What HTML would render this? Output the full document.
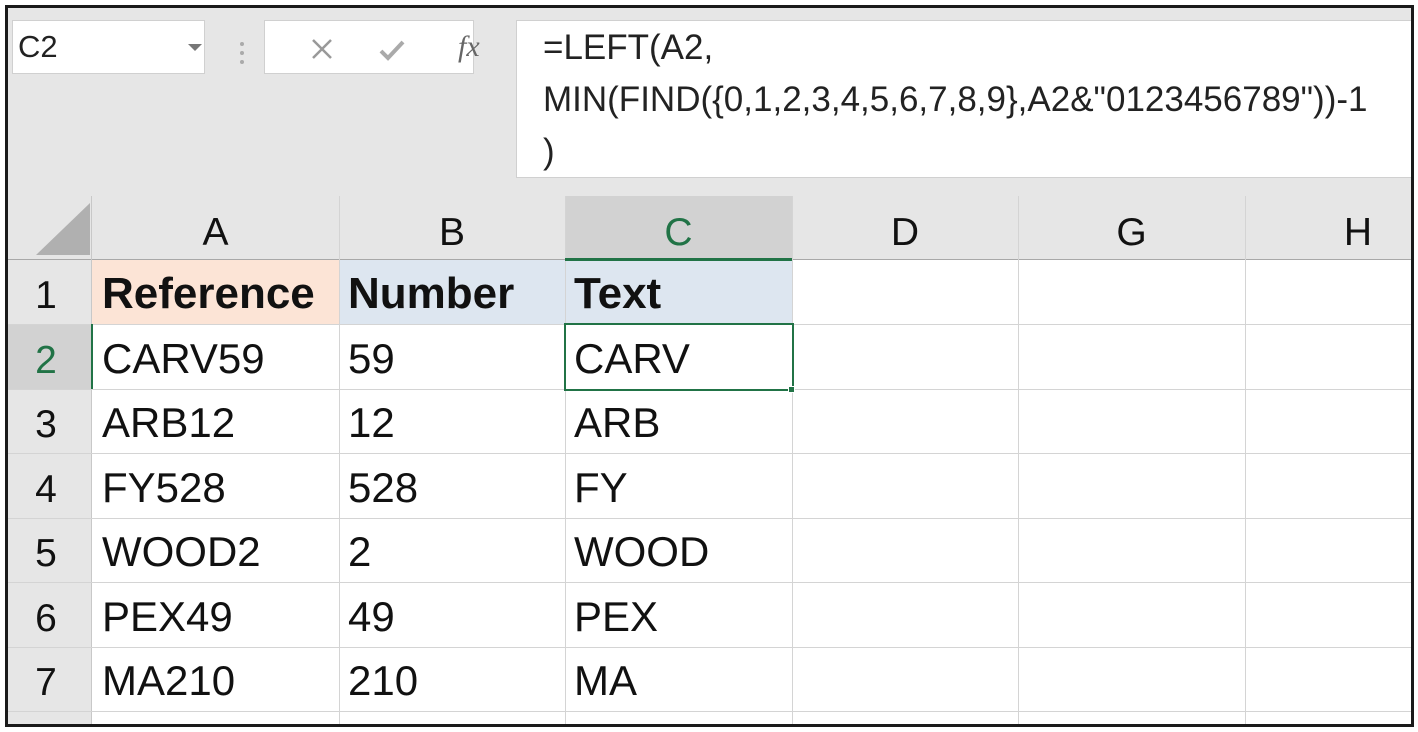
<!DOCTYPE html>
<html><head><meta charset="utf-8"><style>
*{margin:0;padding:0;box-sizing:border-box}
body{width:1418px;height:732px;background:#fff;position:relative;overflow:hidden;font-family:"Liberation Sans",sans-serif}
.a{position:absolute}
.frame{left:5px;top:5px;width:1409px;height:722px;border:3px solid #1a1a1a;background:#e6e6e6;overflow:hidden}
.box{background:#fff;border:1px solid #d0d0d0}
.t{position:absolute;font-size:42px;color:#111;white-space:nowrap;line-height:66px}
.b{font-size:44px;font-weight:bold}
.h{position:absolute;font-size:39px;color:#111;text-align:center;line-height:64px}
.vl{position:absolute;width:1px;background:#d4d4d4}
.hl{position:absolute;height:1px;background:#d4d4d4}
</style></head><body>
<div class="a frame">
<div class="a box" style="left:4px;top:12px;width:193px;height:54px"></div>
<div class="a" style="left:10px;top:20px;font-size:31px;color:#222;line-height:38px">C2</div>
<div class="a" style="left:180px;top:36px;width:0;height:0;border-left:7px solid transparent;border-right:7px solid transparent;border-top:7px solid #777"></div>
<div class="a" style="left:232px;top:34px;width:4px;height:4px;background:#aaa;border-radius:2px"></div>
<div class="a" style="left:232px;top:43px;width:4px;height:4px;background:#aaa;border-radius:2px"></div>
<div class="a" style="left:232px;top:52px;width:4px;height:4px;background:#aaa;border-radius:2px"></div>
<div class="a box" style="left:256px;top:12px;width:210px;height:54px"></div>
<svg class="a" style="left:302px;top:29px" width="24" height="24"><path d="M3 3L21 21M21 3L3 21" stroke="#999" stroke-width="2.5"/></svg>
<svg class="a" style="left:370px;top:30px" width="28" height="24"><path d="M3 13L10 20L25 4" stroke="#aaa" stroke-width="4" fill="none"/></svg>
<div class="a" style="left:450px;top:22px;font-family:'Liberation Serif',serif;font-style:italic;font-size:30px;color:#666;line-height:34px">fx</div>
<div class="a box" style="left:508px;top:12px;width:900px;height:158px;border-right:none"></div>
<div class="a" style="left:535px;top:14px;font-size:35px;color:#222;line-height:52px;white-space:pre">=LEFT(A2,
MIN(FIND({0,1,2,3,4,5,6,7,8,9},A2&amp;"0123456789"))-1
)</div>
<div class="a" style="left:0;top:251px;width:84px;height:470px;background:#e6e6e6"></div>
<div class="a" style="left:0;top:316px;width:84px;height:65px;background:#d2d2d2"></div>
<div class="a" style="left:84px;top:252px;width:1330px;height:470px;background:#fff"></div>
<div class="a" style="left:84px;top:252px;width:247px;height:64px;background:#fce4d6"></div>
<div class="a" style="left:331px;top:252px;width:453px;height:64px;background:#dde6f0"></div>
<div class="a" style="left:557px;top:188px;width:227px;height:63px;background:#d2d2d2"></div>
<svg class="a" style="left:26px;top:193px" width="58" height="56"><polygon points="56,2 56,54 2,54" fill="#b0b0b0"/></svg>
<div class="hl" style="left:0;top:251px;width:1414px;background:#a8a8a8"></div>
<div class="vl" style="left:83px;top:188px;height:540px;background:#c8c8c8"></div>
<div class="vl" style="left:331px;top:188px;height:540px"></div>
<div class="vl" style="left:557px;top:188px;height:540px"></div>
<div class="vl" style="left:784px;top:188px;height:540px"></div>
<div class="vl" style="left:1010px;top:188px;height:540px"></div>
<div class="vl" style="left:1237px;top:188px;height:540px"></div>
<div class="hl" style="left:0;top:316px;width:1414px"></div>
<div class="hl" style="left:0;top:381px;width:1414px"></div>
<div class="hl" style="left:0;top:445px;width:1414px"></div>
<div class="hl" style="left:0;top:510px;width:1414px"></div>
<div class="hl" style="left:0;top:574px;width:1414px"></div>
<div class="hl" style="left:0;top:639px;width:1414px"></div>
<div class="hl" style="left:0;top:703px;width:1414px"></div>
<div class="a" style="left:557px;top:250px;width:227px;height:3px;background:#217346"></div>
<div class="a" style="left:83px;top:316px;width:2px;height:65px;background:#217346"></div>
<div class="a" style="left:556px;top:315px;width:230px;height:68px;border:2.5px solid #217346"></div>
<div class="a" style="left:780px;top:378px;width:7px;height:7px;background:#217346;border:1px solid #fff"></div>
<div class="h" style="left:84px;top:193px;width:247px">A</div>
<div class="h" style="left:331px;top:193px;width:226px">B</div>
<div class="h" style="left:557px;top:193px;width:227px;color:#217346">C</div>
<div class="h" style="left:784px;top:193px;width:226px">D</div>
<div class="h" style="left:1010px;top:193px;width:227px">G</div>
<div class="h" style="left:1237px;top:193px;width:226px">H</div>
<div class="h" style="left:10px;top:256px;width:56px">1</div>
<div class="h" style="left:10px;top:321px;width:56px;color:#217346">2</div>
<div class="h" style="left:10px;top:385px;width:56px">3</div>
<div class="h" style="left:10px;top:450px;width:56px">4</div>
<div class="h" style="left:10px;top:514px;width:56px">5</div>
<div class="h" style="left:10px;top:579px;width:56px">6</div>
<div class="h" style="left:10px;top:643px;width:56px">7</div>
<div class="t b" style="left:94px;top:253px">Reference</div>
<div class="t b" style="left:340px;top:253px">Number</div>
<div class="t b" style="left:566px;top:253px">Text</div>
<div class="t" style="left:94px;top:318px">CARV59</div><div class="t" style="left:340px;top:318px">59</div><div class="t" style="left:566px;top:318px">CARV</div>
<div class="t" style="left:94px;top:382px">ARB12</div><div class="t" style="left:340px;top:382px">12</div><div class="t" style="left:566px;top:382px">ARB</div>
<div class="t" style="left:94px;top:447px">FY528</div><div class="t" style="left:340px;top:447px">528</div><div class="t" style="left:566px;top:447px">FY</div>
<div class="t" style="left:94px;top:511px">WOOD2</div><div class="t" style="left:340px;top:511px">2</div><div class="t" style="left:566px;top:511px">WOOD</div>
<div class="t" style="left:94px;top:576px">PEX49</div><div class="t" style="left:340px;top:576px">49</div><div class="t" style="left:566px;top:576px">PEX</div>
<div class="t" style="left:94px;top:640px">MA210</div><div class="t" style="left:340px;top:640px">210</div><div class="t" style="left:566px;top:640px">MA</div>
</div>
</body></html>
